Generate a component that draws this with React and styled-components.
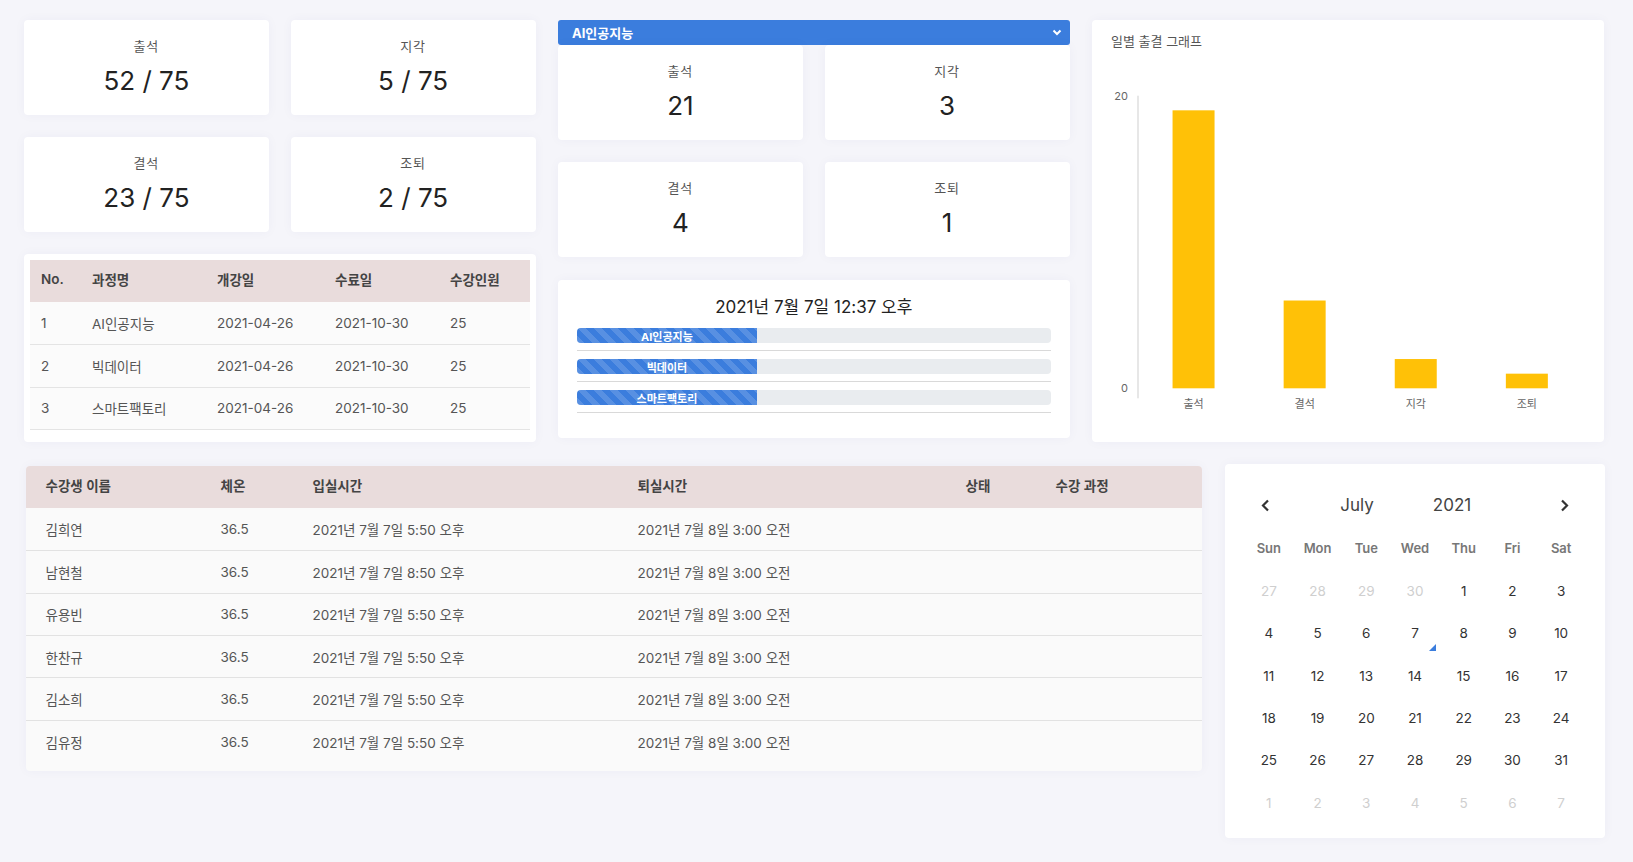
import React from 'react';
import styled, { createGlobalStyle } from 'styled-components';

const GlobalStyle = createGlobalStyle`
  html, body {
    margin: 0;
    padding: 0;
    background: #f5f5fa;
  }
  body {
    font-family: Inter, "Noto Sans CJK KR", sans-serif;
    color: #333;
  }
  * { box-sizing: border-box; }
`;

const totals = [
  { label: '출석', value: '52 / 75' },
  { label: '지각', value: '5 / 75' },
  { label: '결석', value: '23 / 75' },
  { label: '조퇴', value: '2 / 75' },
];

const courseStats = [
  { label: '출석', value: '21' },
  { label: '지각', value: '3' },
  { label: '결석', value: '4' },
  { label: '조퇴', value: '1' },
];

const courses = [
  { no: 1, name: 'AI인공지능', start: '2021-04-26', end: '2021-10-30', count: 25 },
  { no: 2, name: '빅데이터', start: '2021-04-26', end: '2021-10-30', count: 25 },
  { no: 3, name: '스마트팩토리', start: '2021-04-26', end: '2021-10-30', count: 25 },
];

const progress = [
  { name: 'AI인공지능', pct: 38 },
  { name: '빅데이터', pct: 38 },
  { name: '스마트팩토리', pct: 38 },
];

const chartData = [
  { label: '출석', value: 19 },
  { label: '결석', value: 6 },
  { label: '지각', value: 2 },
  { label: '조퇴', value: 1 },
];

const students = [
  { name: '김희연', temp: '36.5', in: '2021년 7월 7일 5:50 오후', out: '2021년 7월 8일 3:00 오전' },
  { name: '남현철', temp: '36.5', in: '2021년 7월 7일 8:50 오후', out: '2021년 7월 8일 3:00 오전' },
  { name: '유용빈', temp: '36.5', in: '2021년 7월 7일 5:50 오후', out: '2021년 7월 8일 3:00 오전' },
  { name: '한찬규', temp: '36.5', in: '2021년 7월 7일 5:50 오후', out: '2021년 7월 8일 3:00 오전' },
  { name: '김소희', temp: '36.5', in: '2021년 7월 7일 5:50 오후', out: '2021년 7월 8일 3:00 오전' },
  { name: '김유정', temp: '36.5', in: '2021년 7월 7일 5:50 오후', out: '2021년 7월 8일 3:00 오전' },
];

const weekDays = ['Sun', 'Mon', 'Tue', 'Wed', 'Thu', 'Fri', 'Sat'];

// july 2021 grid, with the leading / trailing days of the other months
const buildDays = () => {
  const days = [];
  [27, 28, 29, 30].forEach((d) => days.push({ d, muted: true }));
  for (let d = 1; d <= 31; d++) days.push({ d, muted: false, today: d === 7 });
  for (let d = 1; d <= 7; d++) days.push({ d, muted: true });
  return days;
};

const BarChart = () => {
  const axisX = 27;
  const top = 46.7;
  const base = 339.3;
  const unit = (base - top) / 20;
  const cat = 111.1;
  const barW = 42;
  return (
    <ChartSvg width="474" height="380" viewBox="0 0 474 380">
      <line x1={axisX} y1={top} x2={axisX} y2={base + 10} stroke="#cfcfcf" strokeWidth="1" />
      <AxisText x="17" y={top + 4} textAnchor="end">20</AxisText>
      <AxisText x="17" y={base + 4} textAnchor="end">0</AxisText>
      {chartData.map((b, i) => {
        const h = b.value * unit;
        const x = axisX + cat * i + (cat - barW) / 2;
        return (
          <g key={b.label}>
            <rect x={x} y={base - h} width={barW} height={h} fill="#ffc107" />
            <AxisText x={axisX + cat * (i + 0.5)} y={base + 20} textAnchor="middle">
              {b.label}
            </AxisText>
          </g>
        );
      })}
    </ChartSvg>
  );
};

const Chevron = ({ dir }) => (
  <svg width="9" height="13" viewBox="0 0 9 13">
    <polyline
      points={dir === 'left' ? '7,1.5 2,6.5 7,11.5' : '2,1.5 7,6.5 2,11.5'}
      fill="none"
      stroke="#333"
      strokeWidth="2.2"
    />
  </svg>
);

const App = () => {
  const days = buildDays();
  return (
    <>
      <GlobalStyle />
      <Page>
        <TopRow>
          <Column>
            <StatGrid>
              {totals.map((s) => (
                <StatCard key={s.label}>
                  <StatLabel>{s.label}</StatLabel>
                  <StatValue>{s.value}</StatValue>
                </StatCard>
              ))}
            </StatGrid>
            <CourseCard>
              <Table>
                <colgroup>
                  <col style={{ width: 51 }} />
                  <col style={{ width: 125 }} />
                  <col style={{ width: 118 }} />
                  <col style={{ width: 115 }} />
                  <col />
                </colgroup>
                <thead>
                  <tr>
                    <CourseTh>No.</CourseTh>
                    <CourseTh>과정명</CourseTh>
                    <CourseTh>개강일</CourseTh>
                    <CourseTh>수료일</CourseTh>
                    <CourseTh>수강인원</CourseTh>
                  </tr>
                </thead>
                <tbody>
                  {courses.map((c) => (
                    <tr key={c.no}>
                      <CourseTd>{c.no}</CourseTd>
                      <CourseTd>{c.name}</CourseTd>
                      <CourseTd>{c.start}</CourseTd>
                      <CourseTd>{c.end}</CourseTd>
                      <CourseTd>{c.count}</CourseTd>
                    </tr>
                  ))}
                </tbody>
              </Table>
            </CourseCard>
          </Column>

          <Column>
            <Select>
              <span>AI인공지능</span>
              <svg width="10" height="7" viewBox="0 0 10 7">
                <polyline points="1.5,1.5 5,5 8.5,1.5" fill="none" stroke="#fff" strokeWidth="2" />
              </svg>
            </Select>
            <StatGrid>
              {courseStats.map((s) => (
                <StatCard key={s.label}>
                  <StatLabel>{s.label}</StatLabel>
                  <StatValue>{s.value}</StatValue>
                </StatCard>
              ))}
            </StatGrid>
            <ClockCard>
              <ClockTitle>2021년 7월 7일 12:37 오후</ClockTitle>
              {progress.map((p) => (
                <ProgressItem key={p.name}>
                  <Track>
                    <Fill style={{ width: `${p.pct}%` }}>{p.name}</Fill>
                  </Track>
                </ProgressItem>
              ))}
            </ClockCard>
          </Column>

          <ChartCard>
            <ChartTitle>일별 출결 그래프</ChartTitle>
            <BarChart />
          </ChartCard>
        </TopRow>

        <BottomRow>
          <StudentCard>
            <Table>
              <colgroup>
                <col style={{ width: 175 }} />
                <col style={{ width: 92 }} />
                <col style={{ width: 325 }} />
                <col style={{ width: 328 }} />
                <col style={{ width: 90 }} />
                <col />
              </colgroup>
              <thead>
                <tr>
                  <StudentTh>수강생 이름</StudentTh>
                  <StudentTh>체온</StudentTh>
                  <StudentTh>입실시간</StudentTh>
                  <StudentTh>퇴실시간</StudentTh>
                  <StudentTh>상태</StudentTh>
                  <StudentTh>수강 과정</StudentTh>
                </tr>
              </thead>
              <tbody>
                {students.map((s) => (
                  <StudentRow key={s.name}>
                    <StudentTd>{s.name}</StudentTd>
                    <StudentTd>{s.temp}</StudentTd>
                    <StudentTd>{s.in}</StudentTd>
                    <StudentTd>{s.out}</StudentTd>
                    <StudentTd />
                    <StudentTd />
                  </StudentRow>
                ))}
              </tbody>
            </Table>
          </StudentCard>

          <CalendarCard>
            <CalNav>
              <NavButton><Chevron dir="left" /></NavButton>
              <span />
              <NavText>July</NavText>
              <NavText>2021</NavText>
              <span />
              <NavButton><Chevron dir="right" /></NavButton>
            </CalNav>
            <WeekRow>
              {weekDays.map((w) => (
                <WeekDay key={w}>{w}</WeekDay>
              ))}
            </WeekRow>
            <DayGrid>
              {days.map((day, i) => (
                <Day key={i} $muted={day.muted} $today={day.today}>
                  {day.d}
                </Day>
              ))}
            </DayGrid>
          </CalendarCard>
        </BottomRow>
      </Page>
    </>
  );
};

export default App;

const Page = styled.div`
  width: 1633px;
  height: 862px;
  padding: 20px 0 0 24px;
  overflow: hidden;
`;

const TopRow = styled.div`
  display: grid;
  grid-template-columns: repeat(3, 511.5px);
  column-gap: 22.5px;
  height: 422px;
`;

const Column = styled.div`
  display: flex;
  flex-direction: column;
`;

const Card = styled.div`
  background: #fff;
  border-radius: 4px;
  box-shadow: 0 0 12px rgba(60, 60, 120, 0.04);
`;

const StatGrid = styled.div`
  display: grid;
  grid-template-columns: 1fr 1fr;
  column-gap: 22px;
  row-gap: 22px;
`;

const StatCard = styled(Card)`
  height: 95px;
  padding-top: 17px;
  text-align: center;
`;

const StatLabel = styled.div`
  font-size: 13px;
  line-height: 18px;
  color: #555;
  letter-spacing: 1px;
`;

const StatValue = styled.div`
  margin-top: 9px;
  font-size: 26px;
  line-height: 34px;
  color: #222;
`;

const CourseCard = styled(Card)`
  flex: 1;
  margin-top: 22px;
  padding: 6px;
`;

const Table = styled.table`
  width: 100%;
  border-collapse: collapse;
  table-layout: fixed;
`;

const CourseTh = styled.th`
  height: 42px;
  padding: 0 11px 4px;
  background: #e9dcdc;
  text-align: left;
  font-size: 13.5px;
  font-weight: 600;
  color: #444;
`;

const CourseTd = styled.td`
  height: 42.5px;
  padding: 0 11px;
  background: #fbfbfb;
  border-bottom: 1px solid #e4e4e4;
  font-size: 13.5px;
  color: #555;
  white-space: nowrap;
`;

const Select = styled.div`
  height: 25px;
  padding: 0 8px 0 14px;
  display: flex;
  align-items: center;
  justify-content: space-between;
  background: #3b7ddd;
  border-radius: 3px;
  color: #fff;
  font-size: 13px;
  font-weight: 700;
`;

const ClockCard = styled(Card)`
  height: 158px;
  margin-top: 23px;
  padding: 16px 19px 0;
`;

const ClockTitle = styled.div`
  margin-bottom: 10px;
  text-align: center;
  font-size: 17px;
  line-height: 22px;
  color: #222;
`;

const ProgressItem = styled.div`
  padding-bottom: 7px;
  margin-bottom: 8px;
  border-bottom: 1px solid #d9d9d9;
`;

const Track = styled.div`
  height: 15px;
  display: flex;
  background: #e9ecef;
  border-radius: 4px;
  overflow: hidden;
`;

const Fill = styled.div`
  display: flex;
  align-items: center;
  justify-content: center;
  background-color: #3b7ddd;
  background-image: linear-gradient(
    45deg,
    rgba(255, 255, 255, 0.15) 25%,
    transparent 25%,
    transparent 50%,
    rgba(255, 255, 255, 0.15) 50%,
    rgba(255, 255, 255, 0.15) 75%,
    transparent 75%,
    transparent
  );
  background-size: 16px 16px;
  color: #fff;
  font-size: 11px;
  font-weight: 700;
  white-space: nowrap;
`;

const ChartCard = styled(Card)`
  padding: 13px 19px 0;
`;

const ChartTitle = styled.div`
  font-size: 13px;
  line-height: 16px;
  color: #555;
`;

const ChartSvg = styled.svg`
  display: block;
  margin-top: 0;
`;

const AxisText = styled.text`
  font-family: Inter, "Noto Sans CJK KR", sans-serif;
  font-size: 11px;
  fill: #666;
`;

const BottomRow = styled.div`
  display: grid;
  grid-template-columns: 1178px 380px;
  column-gap: 23px;
  align-items: start;
  margin-top: 22px;
`;

const StudentCard = styled(Card)`
  margin: 2px 0 0 2px;
  padding-bottom: 8px;
  background: #fafafa;
  overflow: hidden;
`;

const StudentTh = styled.th`
  height: 42.3px;
  padding: 0 0 4px 19.5px;
  background: #e9dcdc;
  text-align: left;
  font-size: 13.5px;
  font-weight: 600;
  color: #444;
`;

const StudentRow = styled.tr`
  &:not(:last-child) td {
    border-bottom: 1px solid #e2e2e2;
  }
`;

const StudentTd = styled.td`
  height: 42.4px;
  padding: 0 0 0 19.5px;
  font-size: 13.5px;
  color: #555;
  white-space: nowrap;
`;

const CalendarCard = styled(Card)`
  padding: 21px 19.5px 14.5px;
`;

const CalNav = styled.div`
  display: grid;
  grid-template-columns: 42px 23px 95px 95px 1fr 42px;
  align-items: center;
  height: 40px;
`;

const NavButton = styled.div`
  display: flex;
  align-items: center;
  justify-content: center;
`;

const NavText = styled.div`
  text-align: center;
  font-size: 17px;
  color: #444;
`;

const WeekRow = styled.div`
  display: grid;
  grid-template-columns: repeat(7, 1fr);
  height: 30px;
  margin-top: 8px;
  align-items: center;
`;

const WeekDay = styled.div`
  text-align: center;
  font-size: 13px;
  font-weight: 600;
  color: #777;
`;

const DayGrid = styled.div`
  display: grid;
  grid-template-columns: repeat(7, 1fr);
  grid-auto-rows: 42.3px;
  margin-top: 7px;
`;

const Day = styled.div`
  position: relative;
  display: flex;
  align-items: center;
  justify-content: center;
  font-size: 13.5px;
  color: ${(p) => (p.$muted ? '#cfcfcf' : '#333')};

  ${(p) =>
    p.$today &&
    `
    &::after {
      content: '';
      position: absolute;
      right: 3px;
      bottom: 4px;
      width: 0;
      height: 0;
      border-style: solid;
      border-width: 0 0 7px 7px;
      border-color: transparent transparent #3b7ddd transparent;
    }
  `}
`;
